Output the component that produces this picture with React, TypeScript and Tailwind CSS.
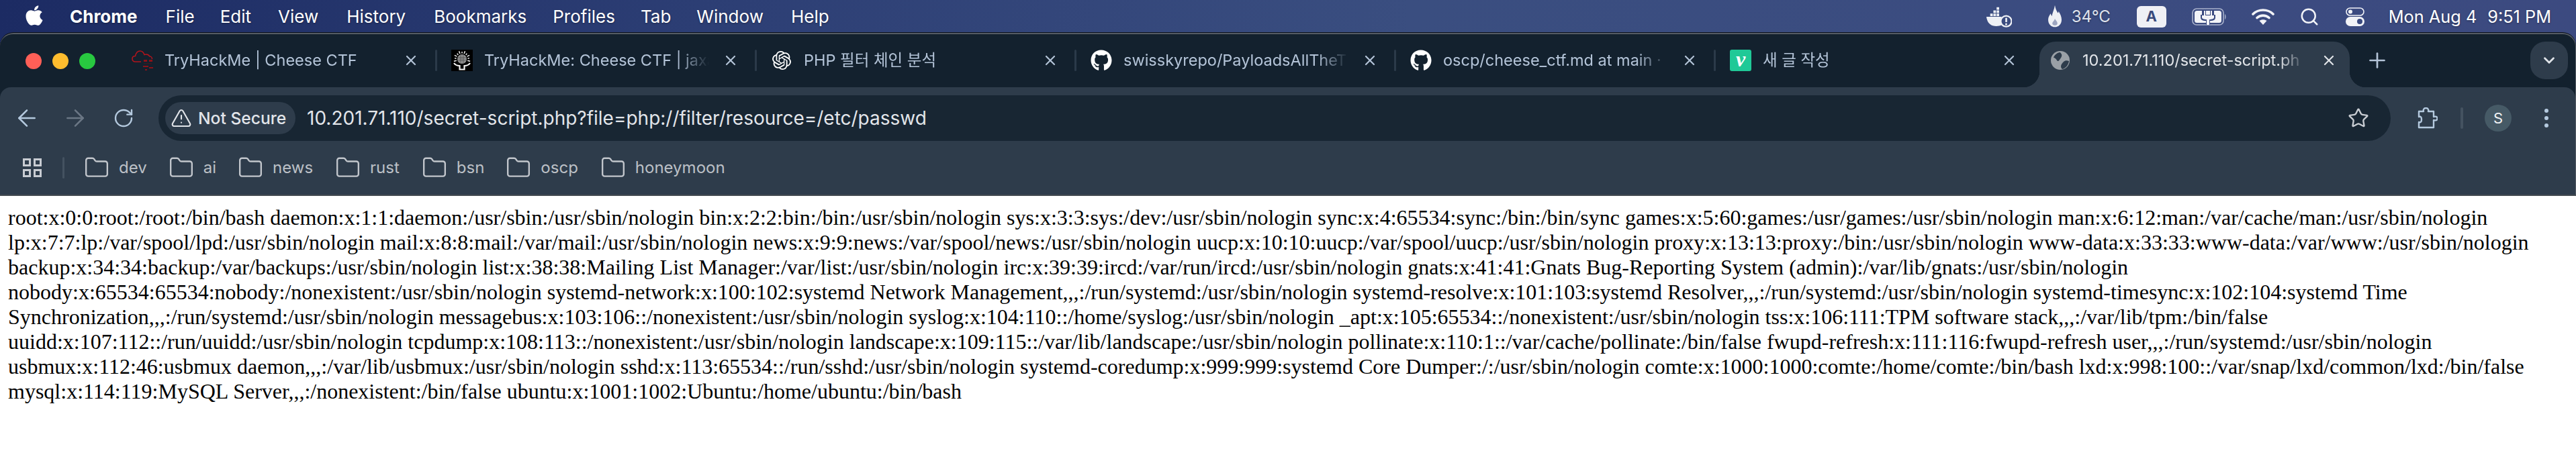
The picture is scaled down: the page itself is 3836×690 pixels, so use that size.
import { ArrowLeft, ArrowRight, ChevronDown, Folder, Plus, RotateCw, Search, Star, TriangleAlert, X } from "lucide-react";
import { SiOpenai } from "react-icons/si";
import { FaApple, FaGithub } from "react-icons/fa";
import type { ReactNode } from "react";

const FONT = "[font-family:Inter,'Noto_Sans_CJK_KR',sans-serif]";

function Cloud() {
  return (
    <svg viewBox="0 0 32 32" className="w-[32px] h-[32px] shrink-0">
      <path d="M14 18H5.5C2.5 18 1 16 1 13.5S3 9.5 5.5 9.5C6.5 5 9 2 12.5 2S18 4.5 19 7.5C22 6.5 25 7 27 10C29 10 30.5 12 30.5 14" fill="none" stroke="#b3141c" strokeWidth="1.6" />
      <g fill="#8a1218">
        <rect x="18" y="15" width="5" height="3" />
        <rect x="26" y="15" width="5" height="3" />
        <rect x="17" y="24" width="8" height="2" />
        <rect x="26" y="26" width="6" height="2" />
        <rect x="20" y="29" width="3" height="2" />
      </g>
      <rect x="18" y="20" width="12" height="1.5" fill="#3a1a20" />
    </svg>
  );
}

function Sun() {
  const ticks = Array.from({ length: 11 }, (_, i) => -105 + i * 21);
  return (
    <svg viewBox="0 0 32 32" className="w-[32px] h-[32px] shrink-0">
      <rect width="32" height="32" fill="#000" />
      {ticks.map((a) => (
        <line key={a} x1="16" y1="5.5" x2="16" y2={a % 2 ? "1.5" : "3"} stroke="#f4f4f4" strokeWidth="1.5" transform={`rotate(${a} 16 14)`} />
      ))}
      <circle cx="16" cy="14" r="7" fill="#9a9a9a" />
      <g stroke="#4c4c4c" strokeWidth="0.7">
        <line x1="9" y1="11.5" x2="23" y2="11.5" /><line x1="9" y1="14" x2="23" y2="14" /><line x1="9" y1="16.5" x2="23" y2="16.5" />
        <line x1="13.5" y1="7" x2="13.5" y2="21" /><line x1="16" y1="7" x2="16" y2="21" /><line x1="18.5" y1="7" x2="18.5" y2="21" />
      </g>
      <path d="M4 20C6 23 10 24 12.5 24V29.5H19.5V24C22 24 26 23 28 20" fill="none" stroke="#f4f4f4" strokeWidth="2.2" />
    </svg>
  );
}

function Velog() {
  return (
    <div className="w-[32px] h-[32px] shrink-0 rounded-[3px] bg-[#20c997] flex items-center justify-center">
      <span className="text-white text-[32px] leading-none italic font-bold [font-family:'Liberation_Serif',serif] -mt-[5px]">v</span>
    </div>
  );
}

function Globe() {
  return (
    <svg viewBox="0 0 28 28" className="w-[28px] h-[28px] shrink-0">
      <circle cx="14" cy="14" r="14" fill="#9aa0a6" />
      <path d="M13 2C9 3 5 6 4 10C6 10 8 12 9 14C10 16 12 15 13 13C15 10 17 8 16 5C15 3 14 2 13 2ZM27 15C24 14 21 14 19 16C17 18 15 20 15 23C15 25 16 26 17 27C22 26 26 21 27 15Z" fill="#2e3c4b" />
    </svg>
  );
}

function Tab({ icon, title, first }: { icon: ReactNode; title: string; first?: boolean }) {
  return (
    <div className="relative w-[476px] h-[68px] shrink-0 flex items-center pl-[23px]">
      {!first && <span className="absolute left-[-1px] top-[12px] w-[3px] h-[32px] rounded-[2px] bg-[#2b3a49]" />}
      <div className="flex items-center w-full h-[32px] -mt-[12px]">
        {icon}
        <div className="ml-[17px] w-[342px] overflow-hidden whitespace-nowrap text-[23.5px] leading-[32px] text-[#b4c4d8] [mask-image:linear-gradient(to_right,black_84%,transparent_98%)]">{title}</div>
        <X className="ml-[13px] w-[24px] h-[24px] text-[#b4c4d8]" strokeWidth={2.2} />
      </div>
    </div>
  );
}

function Bookmark({ label, ml }: { label: string; ml: string }) {
  return (
    <div className={`flex items-center ${ml}`}>
      <Folder className="w-[38px] h-[38px] text-[#c2c6cc]" strokeWidth={1.5} />
      <span className="ml-[14px] text-[24px] text-[#bcc0c6]">{label}</span>
    </div>
  );
}

const LINES = "root:x:0:0:root:/root:/bin/bash daemon:x:1:1:daemon:/usr/sbin:/usr/sbin/nologin bin:x:2:2:bin:/bin:/usr/sbin/nologin sys:x:3:3:sys:/dev:/usr/sbin/nologin sync:x:4:65534:sync:/bin:/bin/sync games:x:5:60:games:/usr/games:/usr/sbin/nologin man:x:6:12:man:/var/cache/man:/usr/sbin/nologin lp:x:7:7:lp:/var/spool/lpd:/usr/sbin/nologin mail:x:8:8:mail:/var/mail:/usr/sbin/nologin news:x:9:9:news:/var/spool/news:/usr/sbin/nologin uucp:x:10:10:uucp:/var/spool/uucp:/usr/sbin/nologin proxy:x:13:13:proxy:/bin:/usr/sbin/nologin www-data:x:33:33:www-data:/var/www:/usr/sbin/nologin backup:x:34:34:backup:/var/backups:/usr/sbin/nologin list:x:38:38:Mailing List Manager:/var/list:/usr/sbin/nologin irc:x:39:39:ircd:/var/run/ircd:/usr/sbin/nologin gnats:x:41:41:Gnats Bug-Reporting System (admin):/var/lib/gnats:/usr/sbin/nologin nobody:x:65534:65534:nobody:/nonexistent:/usr/sbin/nologin systemd-network:x:100:102:systemd Network Management,,,:/run/systemd:/usr/sbin/nologin systemd-resolve:x:101:103:systemd Resolver,,,:/run/systemd:/usr/sbin/nologin systemd-timesync:x:102:104:systemd Time Synchronization,,,:/run/systemd:/usr/sbin/nologin messagebus:x:103:106::/nonexistent:/usr/sbin/nologin syslog:x:104:110::/home/syslog:/usr/sbin/nologin _apt:x:105:65534::/nonexistent:/usr/sbin/nologin tss:x:106:111:TPM software stack,,,:/var/lib/tpm:/bin/false uuidd:x:107:112::/run/uuidd:/usr/sbin/nologin tcpdump:x:108:113::/nonexistent:/usr/sbin/nologin landscape:x:109:115::/var/lib/landscape:/usr/sbin/nologin pollinate:x:110:1::/var/cache/pollinate:/bin/false fwupd-refresh:x:111:116:fwupd-refresh user,,,:/run/systemd:/usr/sbin/nologin usbmux:x:112:46:usbmux daemon,,,:/var/lib/usbmux:/usr/sbin/nologin sshd:x:113:65534::/run/sshd:/usr/sbin/nologin systemd-coredump:x:999:999:systemd Core Dumper:/:/usr/sbin/nologin comte:x:1000:1000:comte:/home/comte:/bin/bash lxd:x:998:100::/var/snap/lxd/common/lxd:/bin/false mysql:x:114:119:MySQL Server,,,:/nonexistent:/bin/false ubuntu:x:1001:1002:Ubuntu:/home/ubuntu:/bin/bash";

export default function App() {
  return (
    <div className={`w-[3836px] h-[690px] overflow-hidden flex flex-col bg-[linear-gradient(to_right,#1c2b63,#2d3f75_1100px,#3a4e80_2100px,#3c4a80)] ${FONT}`}>
      {/* macOS menu bar */}
      <div className="h-[49px] shrink-0 flex items-center pl-[36px] pr-[37px] text-white text-[26px] [text-shadow:0_1px_3px_rgba(0,0,0,0.35)]">
        <FaApple className="w-[30px] h-[34px] -mt-[4px]" />
        <span className="ml-[38px] font-bold">Chrome</span>
        <span className="ml-[42px]">File</span>
        <span className="ml-[38px]">Edit</span>
        <span className="ml-[40px]">View</span>
        <span className="ml-[42px]">History</span>
        <span className="ml-[42px]">Bookmarks</span>
        <span className="ml-[39px]">Profiles</span>
        <span className="ml-[38px]">Tab</span>
        <span className="ml-[38px]">Window</span>
        <span className="ml-[41px]">Help</span>
        <div className="ml-auto flex items-center">
          <svg viewBox="0 0 40 32" className="w-[38px] h-[32px]">
            <g fill="#eef0f5">
              <rect x="16" y="1" width="4" height="4" /><rect x="11" y="6" width="4" height="4" /><rect x="16" y="6" width="4" height="4" /><rect x="6" y="11" width="4" height="4" /><rect x="11" y="11" width="4" height="4" /><rect x="16" y="11" width="4" height="4" />
              <path d="M0 16H24C22 20 22 24 24 29C20 31 14 31 10 30C4 28 1 23 0 16Z" />
            </g>
            <circle cx="31" cy="23" r="8.5" fill="none" stroke="#eef0f5" strokeWidth="2.4" />
            <rect x="29.7" y="17.5" width="2.8" height="7" rx="1" fill="#eef0f5" />
            <circle cx="31" cy="27.5" r="1.6" fill="#eef0f5" />
          </svg>
          <svg viewBox="0 0 22 36" className="ml-[54px] w-[20px] h-[36px] -mt-[2px]">
            <path d="M11 0C12 6 14 10 16 13C17 12 17 11 17 10C20 15 22 19 22 24C22 31 17 36 11 36C5 36 0 31 0 24C0 20 2 17 4 14C5 16 5 17 6 18C7 12 10 7 11 0Z" fill="#eef0f5" />
            <path d="M11 22C12 25 16 27 15 31C14 34 8 34 7 31C6 28 10 26 11 22Z" fill="#3a4a80" opacity=".45" />
          </svg>
          <span className="ml-[15px] w-[53px] text-[24px] text-[#dfe2ec] whitespace-nowrap">34°C</span>
          <div className="ml-[44px] w-[44px] h-[32px] rounded-[6px] bg-[#eff0f5] flex items-center justify-center text-[#394a7c] font-bold text-[22px] [text-shadow:none]">A</div>
          <svg viewBox="0 0 52 26" className="ml-[38px] w-[52px] h-[26px]">
            <rect x="1" y="1" width="46" height="24" rx="6" fill="none" stroke="#aab3cc" strokeWidth="1.6" />
            <rect x="4" y="4" width="40" height="18" rx="3.5" fill="#f2f3f7" />
            <path d="M49 9C51 10 51 16 49 17Z" fill="#aab3cc" />
            <path d="M15 3V10H13V14C13 17 15 19 21 19V25H27V19C33 19 35 17 35 14V10H33V3H27V10H21V3Z" fill="#3a4a80" />
            <path d="M18 4V11H15V14C15 16 18 17 22 17V25H26V17C30 17 33 16 33 14V11H30V4H28V11H20V4Z" fill="#f2f3f7" />
          </svg>
          <svg viewBox="0 0 34 24" className="ml-[37px] w-[34px] h-[24px]">
            <g fill="none" stroke="#f2f3f7" strokeWidth="3.6" strokeLinecap="round">
              <path d="M2 8C10 0 24 0 32 8" />
              <path d="M8 13.5C13 9 21 9 26 13.5" />
            </g>
            <path d="M17 24L11.5 18C14.5 15.5 19.5 15.5 22.5 18Z" fill="#f2f3f7" />
          </svg>
          <Search className="ml-[37px] w-[30px] h-[30px] text-[#f2f3f7]" strokeWidth={2} />
          <svg viewBox="0 0 28 28" className="ml-[39px] w-[28px] h-[28px]">
            <rect x="1" y="1" width="26" height="11" rx="5.5" fill="none" stroke="#f2f3f7" strokeWidth="1.6" />
            <circle cx="7" cy="6.5" r="3" fill="#f2f3f7" />
            <rect y="14" width="28" height="14" rx="7" fill="#f2f3f7" />
            <circle cx="21" cy="21" r="4" fill="#3a4a80" />
          </svg>
          <span className="ml-[36px] whitespace-nowrap text-[25.3px]">Mon Aug 4</span>
          <span className="ml-[16px] whitespace-nowrap text-[25.3px]">9:51 PM</span>
        </div>
      </div>

      {/* Browser window */}
      <div className="h-[241px] shrink-0 rounded-t-[20px] shadow-[0_-1px_0_#0a0f18] border-t-2 border-r border-[#555c64] bg-[#13212e] flex flex-col">
        <div className="h-[79px] shrink-0 flex items-start pt-[11px]">
          <div className="w-[173px] h-[58px] shrink-0 flex items-center pl-[38px] gap-[16px]">
            <span className="w-[24px] h-[24px] rounded-full bg-[#ff5f57]" />
            <span className="w-[24px] h-[24px] rounded-full bg-[#febc2e]" />
            <span className="w-[24px] h-[24px] rounded-full bg-[#28c840]" />
          </div>
          <Tab first icon={<Cloud />} title="TryHackMe | Cheese CTF" />
          <Tab icon={<Sun />} title="TryHackMe: Cheese CTF | jaxa" />
          <Tab icon={<SiOpenai className="w-[28px] h-[32px] mx-[2px] text-white" />} title="PHP 필터 체인 분석" />
          <Tab icon={<FaGithub className="w-[32px] h-[32px] text-white" />} title="swisskyrepo/PayloadsAllTheT" />
          <Tab icon={<FaGithub className="w-[32px] h-[32px] text-white" />} title="oscp/cheese_ctf.md at main ·" />
          <Tab icon={<Velog />} title="새 글 작성" />
          <div className="relative ml-[8px] w-[462px] h-[68px] shrink-0 rounded-t-[24px] bg-[#2e3c4b] flex items-center pl-[17px] pb-[13px]">
            <span className="absolute bottom-0 left-[-24px] w-[24px] h-[24px] bg-[radial-gradient(circle_at_0_0,transparent_24px,#2e3c4b_24.5px)]" />
            <span className="absolute bottom-0 right-[-24px] w-[24px] h-[24px] bg-[radial-gradient(circle_at_100%_0,transparent_24px,#2e3c4b_24.5px)]" />
            <Globe />
            <div className="ml-[19px] w-[332px] overflow-hidden whitespace-nowrap text-[23.5px] leading-[32px] text-[#e2e5e9] [mask-image:linear-gradient(to_right,black_88%,transparent)]">10.201.71.110/secret-script.ph</div>
            <X className="ml-[23px] w-[24px] h-[24px] text-[#e2e5e9]" strokeWidth={2.2} />
          </div>
          <Plus className="ml-[23px] mt-[10px] w-[36px] h-[36px] text-[#b4c4d8]" strokeWidth={1.8} />
          <div className="ml-[210px] w-[56px] h-[56px] rounded-[22px] bg-[#2e3c4b] flex items-center justify-center">
            <ChevronDown className="w-[26px] h-[26px] text-[#dfe3e8]" strokeWidth={2.6} />
          </div>
        </div>
        <div className="flex-1 rounded-t-[16px] bg-[#2e3c4b] flex flex-col">
          <div className="h-[92px] shrink-0 flex items-center py-[12px]">
            <ArrowLeft className="ml-[20px] w-[40px] h-[40px] text-[#b4c9de]" strokeWidth={1.5} />
            <ArrowRight className="ml-[32px] w-[40px] h-[40px] text-[#6b7785]" strokeWidth={1.5} />
            <RotateCw className="ml-[36px] w-[32px] h-[32px] text-[#b4c9de]" strokeWidth={1.8} />
            <div className="ml-[36px] w-[3324px] h-[68px] shrink-0 rounded-full bg-[#182633] flex items-center pl-[10px] pr-[32px]">
              <div className="w-[194px] h-[48px] shrink-0 rounded-full bg-[#2e3c4b] flex items-center pl-[8px]">
                <TriangleAlert className="w-[32px] h-[32px] text-[#e2e5ea]" strokeWidth={1.6} />
                <span className="ml-[9px] text-[24.6px] font-medium text-[#e2e5ea] whitespace-nowrap">Not Secure</span>
              </div>
              <span className="ml-[17px] text-[28px] text-[#e2e5ea] whitespace-nowrap">10.201.71.110/secret-script.php?file=php://filter/resource=/etc/passwd</span>
              <Star className="ml-auto w-[32px] h-[32px] text-[#c8ccd2]" strokeWidth={1.8} />
            </div>
            <svg viewBox="0 0 32 32" className="ml-[38px] w-[32px] h-[32px] shrink-0">
              <path d="M4 6H11C10 3 12 1 14.5 1S19 3 18 6H26V14C29 13 31.5 14 31.5 16.5S29 20 26 19V30H4V22C7 23 8 21 8 18S7 13 4 14Z" fill="none" stroke="#b4c9de" strokeWidth="2.4" strokeLinejoin="round" />
            </svg>
            <span className="ml-[34px] w-[4px] h-[32px] rounded-[2px] bg-[#445260] shrink-0" />
            <div className="ml-[32px] w-[40px] h-[40px] shrink-0 rounded-full bg-[#465a66] flex items-center justify-center text-[#f0f2f4] text-[22px]">S</div>
            <div className="ml-[49px] flex flex-col gap-[5px]">
              <span className="w-[6px] h-[6px] rounded-full bg-[#b4c9de]" />
              <span className="w-[6px] h-[6px] rounded-full bg-[#b4c9de]" />
              <span className="w-[6px] h-[6px] rounded-full bg-[#b4c9de]" />
            </div>
          </div>
          <div className="flex-1 flex items-center pb-[12px]">
            <svg viewBox="0 0 28 28" className="ml-[34px] w-[28px] h-[28px]">
              <g fill="none" stroke="#c8ccd2" strokeWidth="3">
                <rect x="1.5" y="1.5" width="9" height="9" /><rect x="17.5" y="1.5" width="9" height="9" /><rect x="1.5" y="17.5" width="9" height="9" /><rect x="17.5" y="17.5" width="9" height="9" />
              </g>
            </svg>
            <span className="ml-[31px] w-[3px] h-[32px] rounded-[2px] bg-[#445260]" />
            <Bookmark ml="ml-[29px]" label="dev" />
            <Bookmark ml="ml-[32px]" label="ai" />
            <Bookmark ml="ml-[32px]" label="news" />
            <Bookmark ml="ml-[33px]" label="rust" />
            <Bookmark ml="ml-[33px]" label="bsn" />
            <Bookmark ml="ml-[32px]" label="oscp" />
            <Bookmark ml="ml-[33px]" label="honeymoon" />
          </div>
        </div>
      </div>

      <div className="flex-1 bg-white border-t-2 border-[#444a50] pl-[12px] pr-[20px] pt-[14px] text-[32px] text-black [font-family:'Liberation_Serif',serif] leading-[37px]">
        {LINES}
      </div>
    </div>
  );
}
